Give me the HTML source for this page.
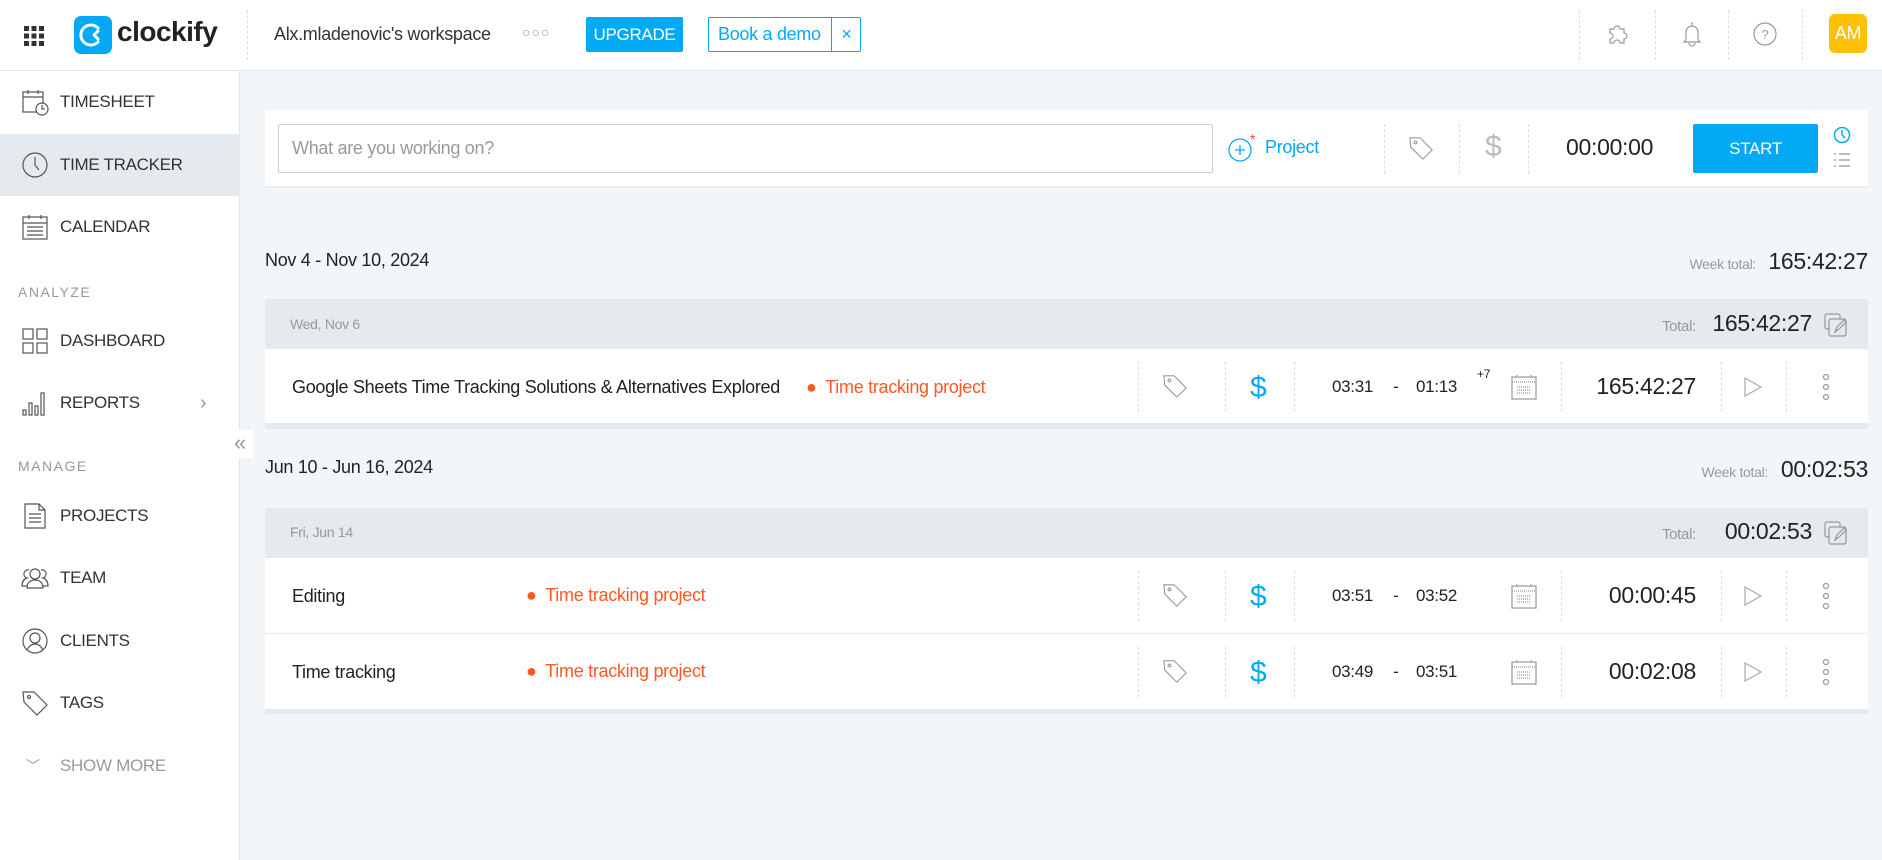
<!DOCTYPE html>
<html><head><meta charset="utf-8"><style>
*{margin:0;padding:0;box-sizing:border-box}
body{width:1882px;height:860px;overflow:hidden;background:#f2f6f8;font-family:"Liberation Sans",sans-serif;color:#333;position:relative;letter-spacing:-0.3px}
.a{position:absolute}
.hdr{left:0;top:0;width:1882px;height:71px;background:#fff;border-bottom:1px solid #e1e6ea}
.vd{position:absolute;border-left:1px dashed #d8dde1}
.side{left:0;top:71px;width:240px;height:789px;background:#fff;border-right:1px solid #e1e6ea}
.it{position:absolute;left:0;width:240px;height:62px;display:flex;align-items:center;font-size:17px;color:#333}
.it svg{position:absolute;left:21px}
.it span{position:absolute;left:60px}
.lbl{position:absolute;left:18px;font-size:14px;color:#999;letter-spacing:1.5px}
.row{position:absolute;left:265px;width:1603px;background:#fff;border-bottom:1px solid #e4eaee}
.gh{position:absolute;left:265px;width:1603px;background:#e4eaee}
.t{position:absolute;white-space:nowrap}
</style></head><body>
<div class="a hdr">
 <svg class="a" style="left:24px;top:26px" width="20" height="20" viewBox="0 0 20 20" fill="#333"><rect x="0" y="0" width="5" height="5"/><rect x="7.5" y="0" width="5" height="5"/><rect x="15" y="0" width="5" height="5"/><rect x="0" y="7.5" width="5" height="5"/><rect x="7.5" y="7.5" width="5" height="5"/><rect x="15" y="7.5" width="5" height="5"/><rect x="0" y="15" width="5" height="5"/><rect x="7.5" y="15" width="5" height="5"/><rect x="15" y="15" width="5" height="5"/></svg>
 <div class="a" style="left:74px;top:16px;width:38px;height:38px;background:#03a9f4;border-radius:7px"></div>
 <svg class="a" style="left:74px;top:16px" width="38" height="38" viewBox="0 0 38 38" fill="none" stroke="#fff" stroke-width="3" stroke-linecap="round"><path d="M24 12a10 10 0 1 0 0 14"/><path d="M20 19l4-4M20 19l4 4"/></svg>
 <div class="t" style="left:117px;top:16px;font-size:28px;color:#222;letter-spacing:-0.5px;font-weight:bold">clockify</div>
 <div class="vd" style="left:247px;top:10px;height:50px"></div>
 <div class="t" style="left:274px;top:24px;font-size:18px;color:#333">Alx.mladenovic's workspace</div>
 <div class="t" style="left:522px;top:24px;font-size:14px;color:#999;letter-spacing:1px">○○○</div>
 <div class="a" style="left:586px;top:17px;width:97px;height:35px;background:#03a9f4;border-radius:2px;color:#fff;font-size:17px;text-align:center;line-height:35px">UPGRADE</div>
 <div class="a" style="left:708px;top:17px;width:153px;height:35px;border:1px solid #03a9f4;border-radius:2px;color:#03a9f4;font-size:18px;line-height:33px;padding-left:9px">Book a demo<span style="position:absolute;left:122px;top:0;height:33px;border-left:1px solid #03a9f4;width:30px;text-align:center;font-size:18px">×</span></div>
 <div class="vd" style="left:1579px;top:10px;height:50px"></div>
 <div class="vd" style="left:1655px;top:10px;height:50px"></div>
 <div class="vd" style="left:1728px;top:10px;height:50px"></div>
 <div class="vd" style="left:1802px;top:10px;height:50px"></div>
 <svg class="a" style="left:1605px;top:22px" width="24" height="24" viewBox="0 0 24 24" fill="none" stroke="#999" stroke-width="1.2"><path d="M5 7h4a3 3 0 1 1 6 0h4v4a3 3 0 1 1 0 6v4h-4a3 3 0 1 0-6 0H5v-4a3 3 0 1 0 0-6z"/></svg>
 <svg class="a" style="left:1681px;top:20px" width="22" height="28" viewBox="0 0 22 28" fill="none" stroke="#999" stroke-width="1.2"><path d="M11 2v3M5 20V12a6 6 0 0 1 12 0v8l2 2H3z"/><path d="M8 23a3 3 0 0 0 6 0"/></svg>
 <svg class="a" style="left:1753px;top:22px" width="24" height="24" viewBox="0 0 24 24" fill="none" stroke="#999" stroke-width="1.2"><circle cx="12" cy="12" r="11"/><text x="12" y="17" font-size="13" fill="#999" stroke="none" text-anchor="middle" font-family="Liberation Sans">?</text></svg>
 <div class="a" style="left:1829px;top:14px;width:38px;height:39px;background:#ffc107;border-radius:6px;color:#fff;font-size:18px;text-align:center;line-height:39px">AM</div>
</div>

<div class="a side">
 <div class="it" style="top:0px"><svg width="28" height="28" viewBox="0 0 28 28" fill="none" stroke="#555" stroke-width="1.2"><rect x="2" y="4" width="20" height="20"/><path d="M2 9h20M7 2v4M17 2v4"/><circle cx="21" cy="21" r="6" fill="#fff"/><path d="M21 17v4h3"/></svg><span>TIMESHEET</span></div>
 <div class="it" style="top:63px;background:#e4eaee"><svg width="28" height="28" viewBox="0 0 28 28" fill="none" stroke="#555" stroke-width="1.2"><circle cx="14" cy="14" r="12"/><path d="M14 6v8l4 5"/></svg><span>TIME TRACKER</span></div>
 <div class="it" style="top:125px"><svg width="28" height="28" viewBox="0 0 28 28" fill="none" stroke="#555" stroke-width="1.2"><rect x="2" y="4" width="24" height="22"/><path d="M2 10h24M8 2v4M20 2v4M6 14h16M6 18h16M6 22h16"/></svg><span>CALENDAR</span></div>
 <div class="lbl" style="top:213px">ANALYZE</div>
 <div class="it" style="top:239px"><svg width="28" height="28" viewBox="0 0 28 28" fill="none" stroke="#555" stroke-width="1.2"><rect x="2" y="2" width="10" height="10"/><rect x="16" y="2" width="10" height="10"/><rect x="2" y="16" width="10" height="10"/><rect x="16" y="16" width="10" height="10"/></svg><span>DASHBOARD</span></div>
 <div class="it" style="top:301px"><svg width="28" height="28" viewBox="0 0 28 28" fill="none" stroke="#555" stroke-width="1.2"><rect x="2" y="21" width="3" height="5"/><rect x="8" y="14" width="3" height="12"/><rect x="14" y="17" width="3" height="9"/><rect x="20" y="4" width="3" height="22"/></svg><span>REPORTS</span><b style="position:absolute;left:200px;color:#999;font-weight:normal;font-size:20px">›</b></div>
 <div class="lbl" style="top:387px">MANAGE</div>
 <div class="it" style="top:414px"><svg width="28" height="28" viewBox="0 0 28 28" fill="none" stroke="#555" stroke-width="1.2"><path d="M4 2h14l6 6v18H4z"/><path d="M18 2v6h6M8 12h12M8 16h12M8 20h12"/></svg><span>PROJECTS</span></div>
 <div class="it" style="top:476px"><svg width="28" height="28" viewBox="0 0 28 28" fill="none" stroke="#555" stroke-width="1.2"><circle cx="14" cy="10" r="5"/><path d="M6 24c0-6 4-8 8-8s8 2 8 8zM8 6a4 4 0 0 0-2 8c-3 1-5 3-5 8h5M20 6a4 4 0 0 1 2 8c3 1 5 3 5 8h-5"/></svg><span>TEAM</span></div>
 <div class="it" style="top:539px"><svg width="28" height="28" viewBox="0 0 28 28" fill="none" stroke="#555" stroke-width="1.2"><circle cx="14" cy="14" r="12"/><circle cx="14" cy="11" r="5"/><path d="M6 23c2-4 5-6 8-6s6 2 8 6"/></svg><span>CLIENTS</span></div>
 <div class="it" style="top:601px"><svg width="28" height="28" viewBox="0 0 28 28" fill="none" stroke="#555" stroke-width="1.2"><path d="M2 3h11l13 13-10 10L3 13z"/><circle cx="8" cy="8" r="1.5"/></svg><span>TAGS</span></div>
 <div class="it" style="top:664px;color:#999"><b style="position:absolute;left:26px;font-weight:normal;font-size:14px">﹀</b><span>SHOW MORE</span></div>
</div>
<div class="a" style="left:226px;top:430px;width:28px;height:28px;background:#fff;color:#999;font-size:22px;text-align:center;line-height:26px">«</div>

<div class="a" style="left:265px;top:110px;width:1603px;height:76px;background:#fff;box-shadow:0 1px 2px rgba(0,0,0,.06)"></div>
<div class="a" style="left:278px;top:124px;width:935px;height:49px;border:1px solid #c6d2d9;border-radius:2px;background:#fff"></div>
<div class="t" style="left:292px;top:138px;font-size:18px;color:#999">What are you working on?</div>
<svg class="a" style="left:1228px;top:134px" width="30" height="30" viewBox="0 0 30 30" fill="none" stroke="#03a9f4" stroke-width="1.3"><circle cx="12" cy="16" r="11"/><path d="M12 11v10M7 16h10"/><text x="22" y="10" font-size="14" fill="#f44336" stroke="none" font-family="Liberation Sans">*</text></svg>
<div class="t" style="left:1265px;top:137px;font-size:18px;color:#03a9f4">Project</div>
<div class="vd" style="left:1384px;top:124px;height:50px"></div>
<div class="vd" style="left:1459px;top:124px;height:50px"></div>
<div class="vd" style="left:1528px;top:124px;height:50px"></div>
<svg class="a" style="left:1408px;top:135px" width="26" height="26" viewBox="0 0 28 28" fill="none" stroke="#999" stroke-width="1.2"><path d="M2 3h11l13 13-10 10L3 13z"/><circle cx="8" cy="8" r="1.5"/></svg>
<div class="t" style="left:1485px;top:130px;font-size:30px;color:#bbb;font-weight:300">$</div>
<div class="t" style="left:1566px;top:134px;font-size:23px;color:#222">00:00:00</div>
<div class="a" style="left:1693px;top:124px;width:125px;height:49px;background:#03a9f4;border-radius:2px;color:#fff;font-size:17px;text-align:center;line-height:49px">START</div>
<svg class="a" style="left:1833px;top:126px" width="18" height="18" viewBox="0 0 18 18" fill="none" stroke="#03a9f4" stroke-width="1.5"><circle cx="9" cy="9" r="7.5"/><path d="M9 4v5l3 3"/></svg>
<svg class="a" style="left:1833px;top:152px" width="18" height="16" viewBox="0 0 18 16" fill="none" stroke="#999" stroke-width="1.3"><path d="M1 2h2M6 2h11M1 8h2M6 8h11M1 14h2M6 14h11"/></svg>

<div class="t" style="left:265px;top:250px;font-size:18px;color:#222">Nov 4 - Nov 10, 2024</div>
<div class="t" style="right:126px;top:256px;font-size:14px;color:#999">Week total:</div>
<div class="t" style="right:14px;top:248px;font-size:23px;color:#222">165:42:27</div>
<div class="gh" style="top:299px;height:50px"></div>
<div class="t" style="left:290px;top:316px;font-size:14px;color:#999">Wed, Nov 6</div>
<div class="t" style="right:186px;top:318px;font-size:15px;color:#999">Total:</div>
<div class="t" style="right:70px;top:310px;font-size:23px;color:#222">165:42:27</div>
<svg class="a" style="left:1823px;top:312px" width="28" height="26" viewBox="0 0 28 26" fill="none" stroke="#999" stroke-width="1.2"><rect x="2" y="2" width="15" height="15" rx="2"/><rect x="6" y="7" width="17" height="17" rx="2" fill="#e4eaee"/><path d="M12 20l2-5 7-7 2 2-7 7z"/></svg>

<div class="row" style="top:349px;height:75px"></div>
<div class="a" style="left:265px;top:424px;width:1603px;height:5px;background:#e4eaee"></div>

<div class="t" style="left:265px;top:457px;font-size:18px;color:#222">Jun 10 - Jun 16, 2024</div>
<div class="t" style="right:114px;top:464px;font-size:14px;color:#999">Week total:</div>
<div class="t" style="right:14px;top:456px;font-size:23px;color:#222">00:02:53</div>
<div class="gh" style="top:508px;height:50px"></div>
<div class="t" style="left:290px;top:524px;font-size:14px;color:#999">Fri, Jun 14</div>
<div class="t" style="right:186px;top:526px;font-size:15px;color:#999">Total:</div>
<div class="t" style="right:70px;top:518px;font-size:23px;color:#222">00:02:53</div>
<svg class="a" style="left:1823px;top:520px" width="28" height="26" viewBox="0 0 28 26" fill="none" stroke="#999" stroke-width="1.2"><rect x="2" y="2" width="15" height="15" rx="2"/><rect x="6" y="7" width="17" height="17" rx="2" fill="#e4eaee"/><path d="M12 20l2-5 7-7 2 2-7 7z"/></svg>
<div class="row" style="top:558px;height:76px"></div>
<div class="row" style="top:634px;height:75px;border-bottom:none"></div>
<div class="a" style="left:265px;top:709px;width:1603px;height:5px;background:#e4eaee"></div>

<div class="t" style="left:292px;top:377px;font-size:18px;color:#222">Google Sheets Time Tracking Solutions &amp; Alternatives Explored</div>
<div class="t" style="left:806px;top:377px;font-size:18px;color:#ff5722">● <span style="margin-left:4px">Time tracking project</span></div>
<div class="t" style="left:292px;top:586px;font-size:18px;color:#222">Editing</div>
<div class="t" style="left:526px;top:585px;font-size:18px;color:#ff5722">● <span style="margin-left:4px">Time tracking project</span></div>
<div class="t" style="left:292px;top:662px;font-size:18px;color:#222">Time tracking</div>
<div class="t" style="left:526px;top:661px;font-size:18px;color:#ff5722">● <span style="margin-left:4px">Time tracking project</span></div>

<div class="vd" style="left:1138px;top:362px;height:50px"></div><div class="vd" style="left:1225px;top:362px;height:50px"></div><div class="vd" style="left:1294px;top:362px;height:50px"></div><div class="vd" style="left:1561px;top:362px;height:50px"></div><div class="vd" style="left:1721px;top:362px;height:50px"></div><div class="vd" style="left:1786px;top:362px;height:50px"></div>
<svg class="a" style="left:1162px;top:373px" width="26" height="26" viewBox="0 0 28 28" fill="none" stroke="#999" stroke-width="1.2"><path d="M2 3h11l13 13-10 10L3 13z"/><circle cx="8" cy="8" r="1.5"/></svg>
<div class="t" style="left:1250px;top:371px;font-size:30px;color:#03a9f4">$</div>
<div class="t" style="left:1332px;top:377px;font-size:17px;color:#222">03:31</div><div class="t" style="left:1393px;top:377px;font-size:17px;color:#222">-</div><div class="t" style="left:1416px;top:377px;font-size:17px;color:#222">01:13</div>
<div class="t" style="left:1477px;top:367px;font-size:12px;color:#222">+7</div>
<svg class="a" style="left:1511px;top:374px" width="26" height="26" viewBox="0 0 26 26" fill="none" stroke="#999" stroke-width="1.2"><rect x="1" y="3" width="24" height="22"/><path d="M1 8h24M6 1v4M20 1v4M6 13h14M6 16h14M6 19h14" stroke-dasharray="1 1"/></svg>
<div class="t" style="right:186px;top:373px;font-size:23px;color:#222">165:42:27</div>
<svg class="a" style="left:1743px;top:376px" width="20" height="22" viewBox="0 0 20 22" fill="none" stroke="#aaa" stroke-width="1.2"><path d="M2 2l16 9-16 9z"/></svg>
<svg class="a" style="left:1820px;top:373px" width="12" height="30" viewBox="0 0 12 30" fill="none" stroke="#999" stroke-width="1.2"><circle cx="6" cy="4" r="2.5"/><circle cx="6" cy="14" r="2.5"/><circle cx="6" cy="24" r="2.5"/></svg>

<div class="vd" style="left:1138px;top:571px;height:50px"></div><div class="vd" style="left:1225px;top:571px;height:50px"></div><div class="vd" style="left:1294px;top:571px;height:50px"></div><div class="vd" style="left:1561px;top:571px;height:50px"></div><div class="vd" style="left:1721px;top:571px;height:50px"></div><div class="vd" style="left:1786px;top:571px;height:50px"></div>
<svg class="a" style="left:1162px;top:582px" width="26" height="26" viewBox="0 0 28 28" fill="none" stroke="#999" stroke-width="1.2"><path d="M2 3h11l13 13-10 10L3 13z"/><circle cx="8" cy="8" r="1.5"/></svg>
<div class="t" style="left:1250px;top:580px;font-size:30px;color:#03a9f4">$</div>
<div class="t" style="left:1332px;top:586px;font-size:17px;color:#222">03:51</div><div class="t" style="left:1393px;top:586px;font-size:17px;color:#222">-</div><div class="t" style="left:1416px;top:586px;font-size:17px;color:#222">03:52</div>
<svg class="a" style="left:1511px;top:583px" width="26" height="26" viewBox="0 0 26 26" fill="none" stroke="#999" stroke-width="1.2"><rect x="1" y="3" width="24" height="22"/><path d="M1 8h24M6 1v4M20 1v4M6 13h14M6 16h14M6 19h14" stroke-dasharray="1 1"/></svg>
<div class="t" style="right:186px;top:582px;font-size:23px;color:#222">00:00:45</div>
<svg class="a" style="left:1743px;top:585px" width="20" height="22" viewBox="0 0 20 22" fill="none" stroke="#aaa" stroke-width="1.2"><path d="M2 2l16 9-16 9z"/></svg>
<svg class="a" style="left:1820px;top:582px" width="12" height="30" viewBox="0 0 12 30" fill="none" stroke="#999" stroke-width="1.2"><circle cx="6" cy="4" r="2.5"/><circle cx="6" cy="14" r="2.5"/><circle cx="6" cy="24" r="2.5"/></svg>

<div class="vd" style="left:1138px;top:647px;height:50px"></div><div class="vd" style="left:1225px;top:647px;height:50px"></div><div class="vd" style="left:1294px;top:647px;height:50px"></div><div class="vd" style="left:1561px;top:647px;height:50px"></div><div class="vd" style="left:1721px;top:647px;height:50px"></div><div class="vd" style="left:1786px;top:647px;height:50px"></div>
<svg class="a" style="left:1162px;top:658px" width="26" height="26" viewBox="0 0 28 28" fill="none" stroke="#999" stroke-width="1.2"><path d="M2 3h11l13 13-10 10L3 13z"/><circle cx="8" cy="8" r="1.5"/></svg>
<div class="t" style="left:1250px;top:656px;font-size:30px;color:#03a9f4">$</div>
<div class="t" style="left:1332px;top:662px;font-size:17px;color:#222">03:49</div><div class="t" style="left:1393px;top:662px;font-size:17px;color:#222">-</div><div class="t" style="left:1416px;top:662px;font-size:17px;color:#222">03:51</div>
<svg class="a" style="left:1511px;top:659px" width="26" height="26" viewBox="0 0 26 26" fill="none" stroke="#999" stroke-width="1.2"><rect x="1" y="3" width="24" height="22"/><path d="M1 8h24M6 1v4M20 1v4M6 13h14M6 16h14M6 19h14" stroke-dasharray="1 1"/></svg>
<div class="t" style="right:186px;top:658px;font-size:23px;color:#222">00:02:08</div>
<svg class="a" style="left:1743px;top:661px" width="20" height="22" viewBox="0 0 20 22" fill="none" stroke="#aaa" stroke-width="1.2"><path d="M2 2l16 9-16 9z"/></svg>
<svg class="a" style="left:1820px;top:658px" width="12" height="30" viewBox="0 0 12 30" fill="none" stroke="#999" stroke-width="1.2"><circle cx="6" cy="4" r="2.5"/><circle cx="6" cy="14" r="2.5"/><circle cx="6" cy="24" r="2.5"/></svg>
</body></html>
